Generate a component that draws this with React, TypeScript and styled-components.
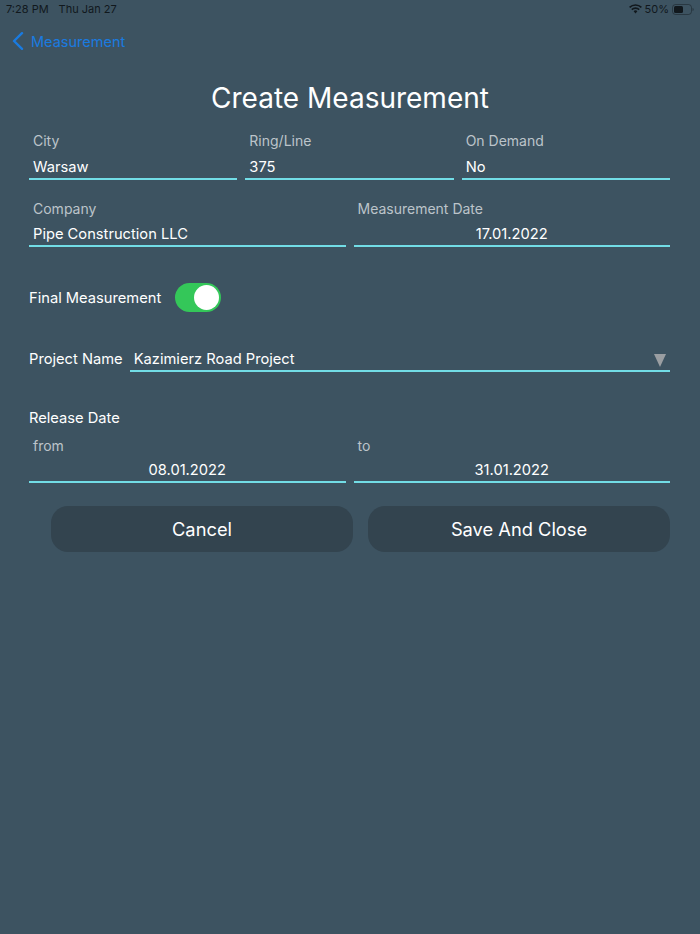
import React from 'react'
import styled, { createGlobalStyle } from 'styled-components'

const Global = createGlobalStyle`
  html, body {
    margin: 0;
    padding: 0;
    background: #3d5361;
  }
  * { box-sizing: border-box; }
`

const Page = styled.div`
  width: 700px;
  height: 934px;
  overflow: hidden;
  background: #3d5361;
  font-family: Inter, "Liberation Sans", sans-serif;
  color: #fff;
`

const StatusBar = styled.div`
  height: 18px;
  padding: 0 6px;
  display: flex;
  align-items: center;
  justify-content: space-between;
  font-size: 11px;
  color: #11181d;
`

const StatusGroup = styled.div`
  display: flex;
  align-items: center;
  gap: ${p => p.$gap ?? 4}px;
`

const BackRow = styled.div`
  height: 46px;
  padding: 0 0 0 12px;
  display: flex;
  align-items: center;
  gap: 7px;
  font-size: 14.5px;
  color: #1a7be0;
`

const Title = styled.h1`
  margin: 0;
  height: 68px;
  font-size: 28px;
  font-weight: 400;
  line-height: 68px;
  text-align: center;
`

const Form = styled.div`
  padding: 0 30px 0 29px;
`

const Row = styled.div`
  display: grid;
  grid-template-columns: repeat(${p => p.$cols}, 1fr);
  gap: 8px;
  margin-top: ${p => p.$top ?? 0}px;
`

const Field = styled.div`
  display: flex;
  flex-direction: column;
`

const Label = styled.div`
  height: 18px;
  line-height: 18px;
  padding-left: 4px;
  font-size: 14px;
  color: #bcc4ca;
`

const Value = styled.div`
  height: ${p => p.$h ?? 30}px;
  padding: 0 4px 1px;
  display: flex;
  align-items: flex-end;
  justify-content: ${p => (p.$center ? 'center' : 'flex-start')};
  font-size: 14.7px;
  line-height: 20px;
  border-bottom: 2px solid #72dde6;
`

const ToggleRow = styled.div`
  margin-top: 36px;
  display: flex;
  align-items: center;
  gap: 14px;
  font-size: 14.7px;
`

const Switch = styled.div`
  position: relative;
  width: 46px;
  height: 29px;
  border-radius: 15px;
  background: #34c759;
`

const Knob = styled.div`
  position: absolute;
  top: 2px;
  right: 2px;
  width: 25px;
  height: 25px;
  border-radius: 50%;
  background: #fff;
`

const ProjectRow = styled.div`
  margin-top: 30px;
  display: flex;
  align-items: flex-end;
  gap: 7px;
  font-size: 14.7px;
`

const ProjectLabel = styled.div`
  padding-bottom: 3px;
  line-height: 20px;
`

const Select = styled(Value)`
  flex: 1;
  justify-content: space-between;
`

const Arrow = styled.div`
  width: 0;
  height: 0;
  margin: 0 0 2px;
  border-left: 6.5px solid transparent;
  border-right: 6.5px solid transparent;
  border-top: 13px solid #9a9ea2;
`

const SectionLabel = styled.div`
  margin-top: 36px;
  font-size: 14.7px;
  line-height: 20px;
`

const Actions = styled.div`
  margin-top: 23px;
  padding-left: 22px;
  display: grid;
  grid-template-columns: 1fr 1fr;
  gap: 15px;
`

const Action = styled.button`
  height: 46px;
  border: 0;
  border-radius: 17px;
  background: #33444f;
  color: #fff;
  font-family: inherit;
  font-size: 18.3px;
`

export default function App() {
  return (
    <Page>
      <Global />
      <StatusBar>
        <StatusGroup $gap={10}>
          <span>7:28 PM</span>
          <span>Thu Jan 27</span>
        </StatusGroup>
        <StatusGroup $gap={3}>
          <svg width="13" height="10" viewBox="0 0 13 10">
            <path d="M0.6 3.4a8.4 8.4 0 0 1 11.8 0" fill="none" stroke="#11181d" strokeWidth="1.6" />
            <path d="M2.8 5.6a5.3 5.3 0 0 1 7.4 0" fill="none" stroke="#11181d" strokeWidth="1.6" />
            <path d="M4.6 7.3a2.7 2.7 0 0 1 3.8 0L6.5 9.4z" fill="#11181d" />
          </svg>
          <span>50%</span>
          <svg width="22" height="11" viewBox="0 0 22 11">
            <rect x="0.5" y="0.5" width="19" height="10" rx="3" fill="none" stroke="#11181d" strokeOpacity="0.45" />
            <rect x="2" y="2" width="9" height="7" rx="1.500" fill="#11181d" />
            <path d="M20.500 4v3c.8-.2 1.300-.8 1.300-1.500S21.300 4.200 20.500 4z" fill="#11181d" fillOpacity="0.45" />
          </svg>
        </StatusGroup>
      </StatusBar>

      <BackRow>
        <svg width="12" height="18" viewBox="0 0 12 18">
          <path d="M10 1.200L2 9l8 7.800" fill="none" stroke="#1a7be0" strokeWidth="2.400" strokeLinecap="round" strokeLinejoin="round" />
        </svg>
        <span>Measurement</span>
      </BackRow>

      <Title>Create Measurement</Title>

      <Form>
        <Row $cols={3}>
          <Field>
            <Label>City</Label>
            <Value>Warsaw</Value>
          </Field>
          <Field>
            <Label>Ring/Line</Label>
            <Value>375</Value>
          </Field>
          <Field>
            <Label>On Demand</Label>
            <Value>No</Value>
          </Field>
        </Row>

        <Row $cols={2} $top={20}>
          <Field>
            <Label>Company</Label>
            <Value $h={29}>Pipe Construction LLC</Value>
          </Field>
          <Field>
            <Label>Measurement Date</Label>
            <Value $h={29} $center>17.01.2022</Value>
          </Field>
        </Row>

        <ToggleRow>
          <span>Final Measurement</span>
          <Switch>
            <Knob />
          </Switch>
        </ToggleRow>

        <ProjectRow>
          <ProjectLabel>Project Name</ProjectLabel>
          <Select>
            <span>Kazimierz Road Project</span>
            <Arrow />
          </Select>
        </ProjectRow>

        <SectionLabel>Release Date</SectionLabel>

        <Row $cols={2} $top={9}>
          <Field>
            <Label>from</Label>
            <Value $h={28} $center>08.01.2022</Value>
          </Field>
          <Field>
            <Label>to</Label>
            <Value $h={28} $center>31.01.2022</Value>
          </Field>
        </Row>

        <Actions>
          <Action>Cancel</Action>
          <Action>Save And Close</Action>
        </Actions>
      </Form>
    </Page>
  )
}
